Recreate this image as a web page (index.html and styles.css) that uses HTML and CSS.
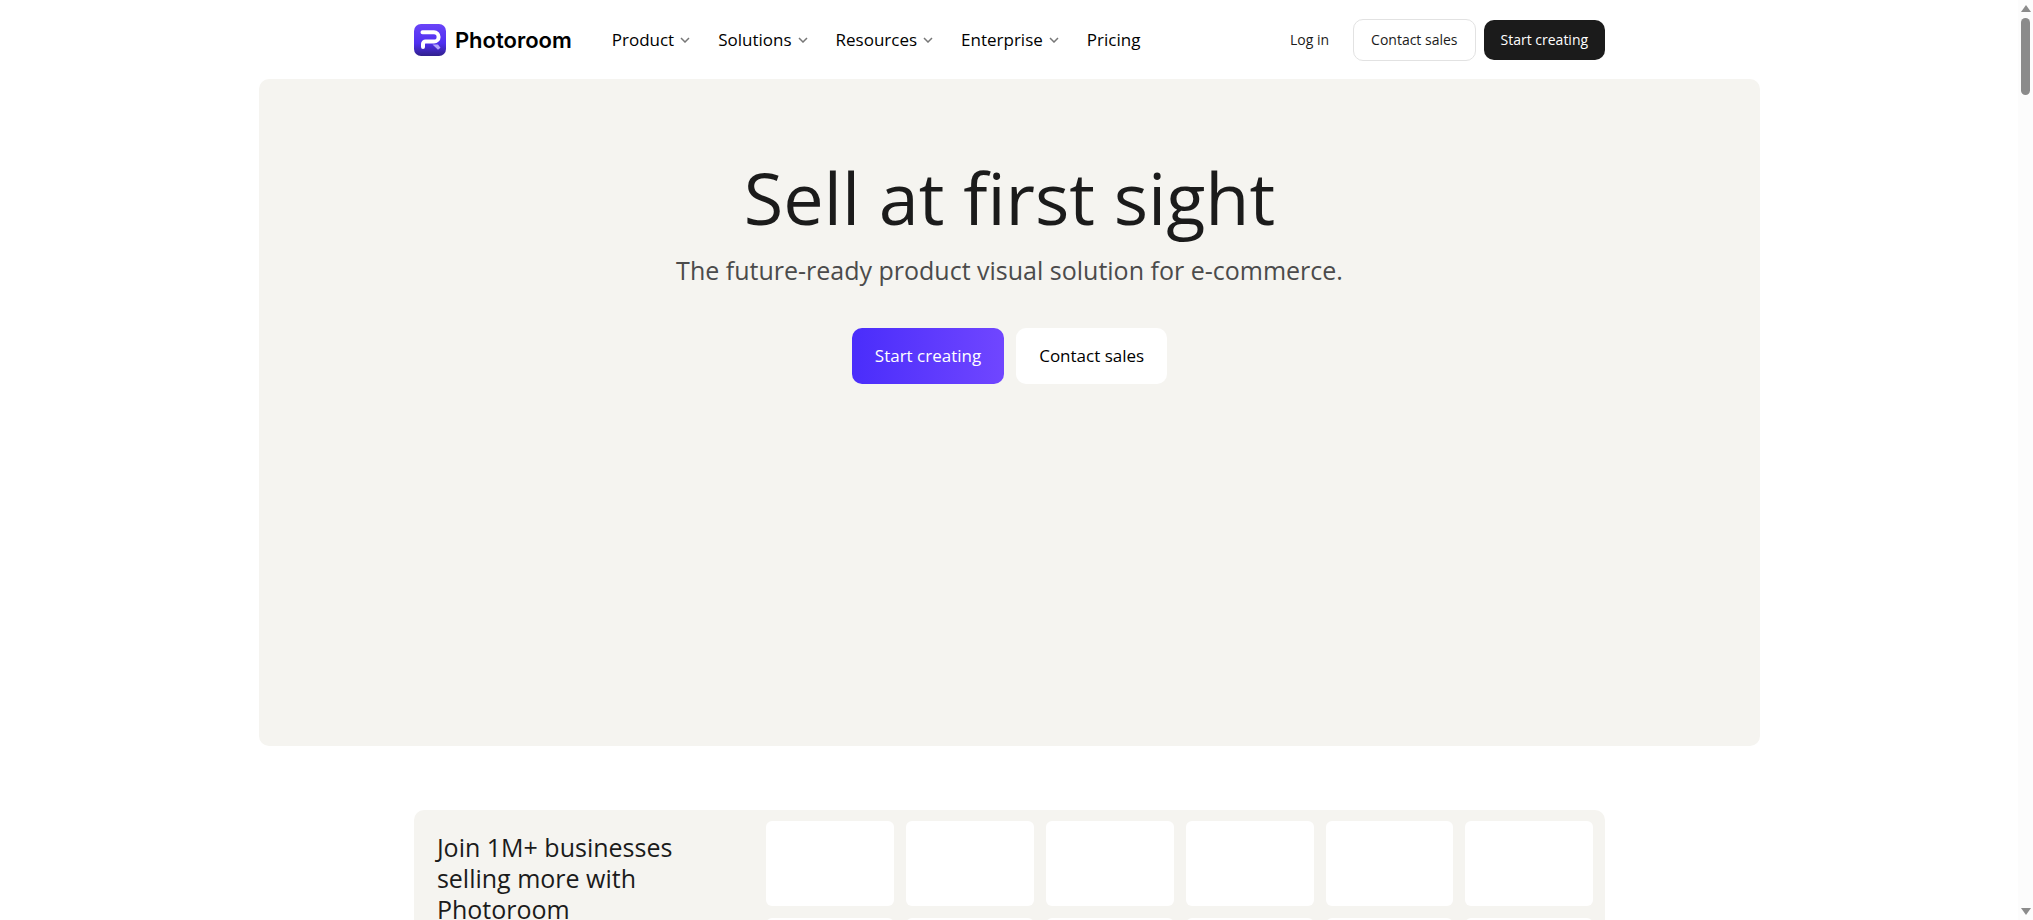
FILE: index.html
```html
<!doctype html>
<html lang="en">
<head>
    <meta charset="UTF-8">
    <meta name="viewport" content="width=device-width, initial-scale=1.0">
    <title>Photoroom</title>
    <link rel="stylesheet" href="styles.css">
</head>
<body>
    <header class="header">
        <a href="#" class="logo">
            <svg class="logo-icon" viewBox="0 0 32 32" aria-hidden="true">
                <defs>
                    <linearGradient id="logo-bg" x1="0" y1="0" x2="0" y2="1">
                        <stop offset="0" stop-color="#6a44f8"/>
                        <stop offset="0.6" stop-color="#4f2ff0"/>
                        <stop offset="1" stop-color="#30208c"/>
                    </linearGradient>
                </defs>
                <rect width="32" height="32" rx="7" fill="url(#logo-bg)"/>
                <path d="M8.500 8.300H20a4.600 4.600 0 0 1 0 9.200H11.500a2.500 2.500 0 0 0-2.500 2.500V23" fill="none" stroke="#fff" stroke-width="4" stroke-linecap="round" stroke-linejoin="round"/>
                <path d="M18.500 20.500h5.500l2.500 3.200-2.500 2.100z" fill="#b3a6fa"/>
            </svg>
            <span>Photoroom</span>
        </a>
        <nav class="nav">
            <button type="button" class="nav-item">Product
                <svg class="chevron" viewBox="0 0 10 6"><path d="M1 1l4 4 4-4"/></svg>
            </button>
            <button type="button" class="nav-item">Solutions
                <svg class="chevron" viewBox="0 0 10 6"><path d="M1 1l4 4 4-4"/></svg>
            </button>
            <button type="button" class="nav-item">Resources
                <svg class="chevron" viewBox="0 0 10 6"><path d="M1 1l4 4 4-4"/></svg>
            </button>
            <button type="button" class="nav-item">Enterprise
                <svg class="chevron" viewBox="0 0 10 6"><path d="M1 1l4 4 4-4"/></svg>
            </button>
            <a href="#" class="nav-item">Pricing</a>
        </nav>
        <div class="actions">
            <a href="#" class="login">Log in</a>
            <a href="#" class="btn btn-outline">Contact sales</a>
            <a href="#" class="btn btn-dark">Start creating</a>
        </div>
    </header>
    <main>
        <section class="hero">
            <h1>Sell at first sight</h1>
            <p>The future-ready product visual solution for e-commerce.</p>
            <div class="hero-buttons">
                <a href="#" class="btn-large btn-primary">Start creating</a>
                <a href="#" class="btn-large btn-white">Contact sales</a>
            </div>
        </section>
        <section class="brands">
            <h2>Join 1M+ businesses selling more with Photoroom</h2>
            <div class="brand-grid">
                <div class="brand"></div>
                <div class="brand"></div>
                <div class="brand"></div>
                <div class="brand"></div>
                <div class="brand"></div>
                <div class="brand"></div>
                <div class="brand"></div>
                <div class="brand"></div>
                <div class="brand"></div>
                <div class="brand"></div>
                <div class="brand"></div>
                <div class="brand"></div>
            </div>
        </section>
    </main>
    <div class="scrollbar" aria-hidden="true">
        <span class="scroll-up"></span>
        <span class="scroll-thumb"></span>
        <span class="scroll-down"></span>
    </div>
</body>
</html>
```

FILE: styles.css
```css
*{
    margin: 0;
    padding: 0;
    box-sizing: border-box;
}
body{
    height: 100vh;
    padding-right: 14px;
    overflow: hidden;
    background-color: #fff;
    color: #1b1b1b;
    font-family: "Open Sans", "Noto Sans", sans-serif;
}
a{
    color: inherit;
    text-decoration: none;
}
.header{
    display: flex;
    align-items: center;
    width: 59%;
    height: 79px;
    margin: 0 auto;
}
.logo{
    display: flex;
    align-items: center;
    gap: 9px;
    color: #000;
    font-family: Inter, sans-serif;
    font-size: 22px;
    font-weight: 600;
}
.logo-icon{
    width: 32px;
    height: 32px;
}
.nav{
    display: flex;
    align-items: center;
    gap: 28px;
    margin-left: 40px;
}
.nav-item{
    display: flex;
    align-items: center;
    gap: 6px;
    border: none;
    background: none;
    color: #000;
    font-family: inherit;
    font-size: 17px;
    line-height: 24px;
    cursor: pointer;
}
.chevron{
    width: 10px;
    height: 6px;
    fill: none;
    stroke: #777;
    stroke-width: 1.5;
}
.actions{
    display: flex;
    align-items: center;
    gap: 8px;
    margin-left: auto;
    font-size: 14px;
}
.login{
    margin-right: 16px;
}
.btn{
    padding: 0 17px;
    border-radius: 10px;
    line-height: 40px;
}
.btn-outline{
    border: 1px solid #e2e2e2;
}
.btn-dark{
    background-color: #1b1b1b;
    color: #fff;
}
.hero{
    display: flex;
    flex-direction: column;
    align-items: center;
    width: 74.3%;
    height: 667px;
    margin: 0 auto;
    padding-top: 72px;
    border-radius: 10px;
    background-color: #f5f4f0;
    text-align: center;
}
.hero h1{
    font-size: 72px;
    font-weight: 400;
    line-height: 92px;
}
.hero p{
    margin-top: 9px;
    color: #4b4b4b;
    font-size: 25px;
    line-height: 36px;
}
.hero-buttons{
    display: flex;
    gap: 12px;
    margin-top: 40px;
}
.btn-large{
    padding: 0 23px;
    border-radius: 10px;
    font-size: 17px;
    line-height: 56px;
}
.btn-primary{
    background-image: linear-gradient(90deg, #4a2dfb, #7046ff);
    color: #fff;
}
.btn-white{
    background-color: #fff;
    color: #000;
}
.brands{
    display: grid;
    grid-template-columns: 7fr 17fr;
    width: 59%;
    margin: 64px auto 0;
    padding: 11px 12px;
    border-radius: 10px;
    background-color: #f5f4f0;
}
.brands h2{
    padding: 11px 72px 0 11px;
    font-size: 25px;
    font-weight: 400;
    line-height: 31px;
}
.brand-grid{
    display: grid;
    grid-template-columns: repeat(6, 1fr);
    gap: 12px;
}
.brand{
    height: 85px;
    border-radius: 6px;
    background-color: #fff;
}
.scrollbar{
    position: fixed;
    top: 0;
    right: 0;
    bottom: 0;
    display: flex;
    flex-direction: column;
    align-items: center;
    width: 15px;
    padding: 5px 0;
    background-color: #fcfcfc;
}
.scroll-up,
.scroll-down{
    border: 5px solid transparent;
}
.scroll-up{
    border-top: none;
    border-bottom: 7px solid #8b8b8b;
}
.scroll-down{
    margin-top: auto;
    border-bottom: none;
    border-top: 7px solid #8b8b8b;
}
.scroll-thumb{
    width: 9px;
    height: 77px;
    margin-top: 6px;
    border-radius: 5px;
    background-color: #8b8b8b;
}
```
